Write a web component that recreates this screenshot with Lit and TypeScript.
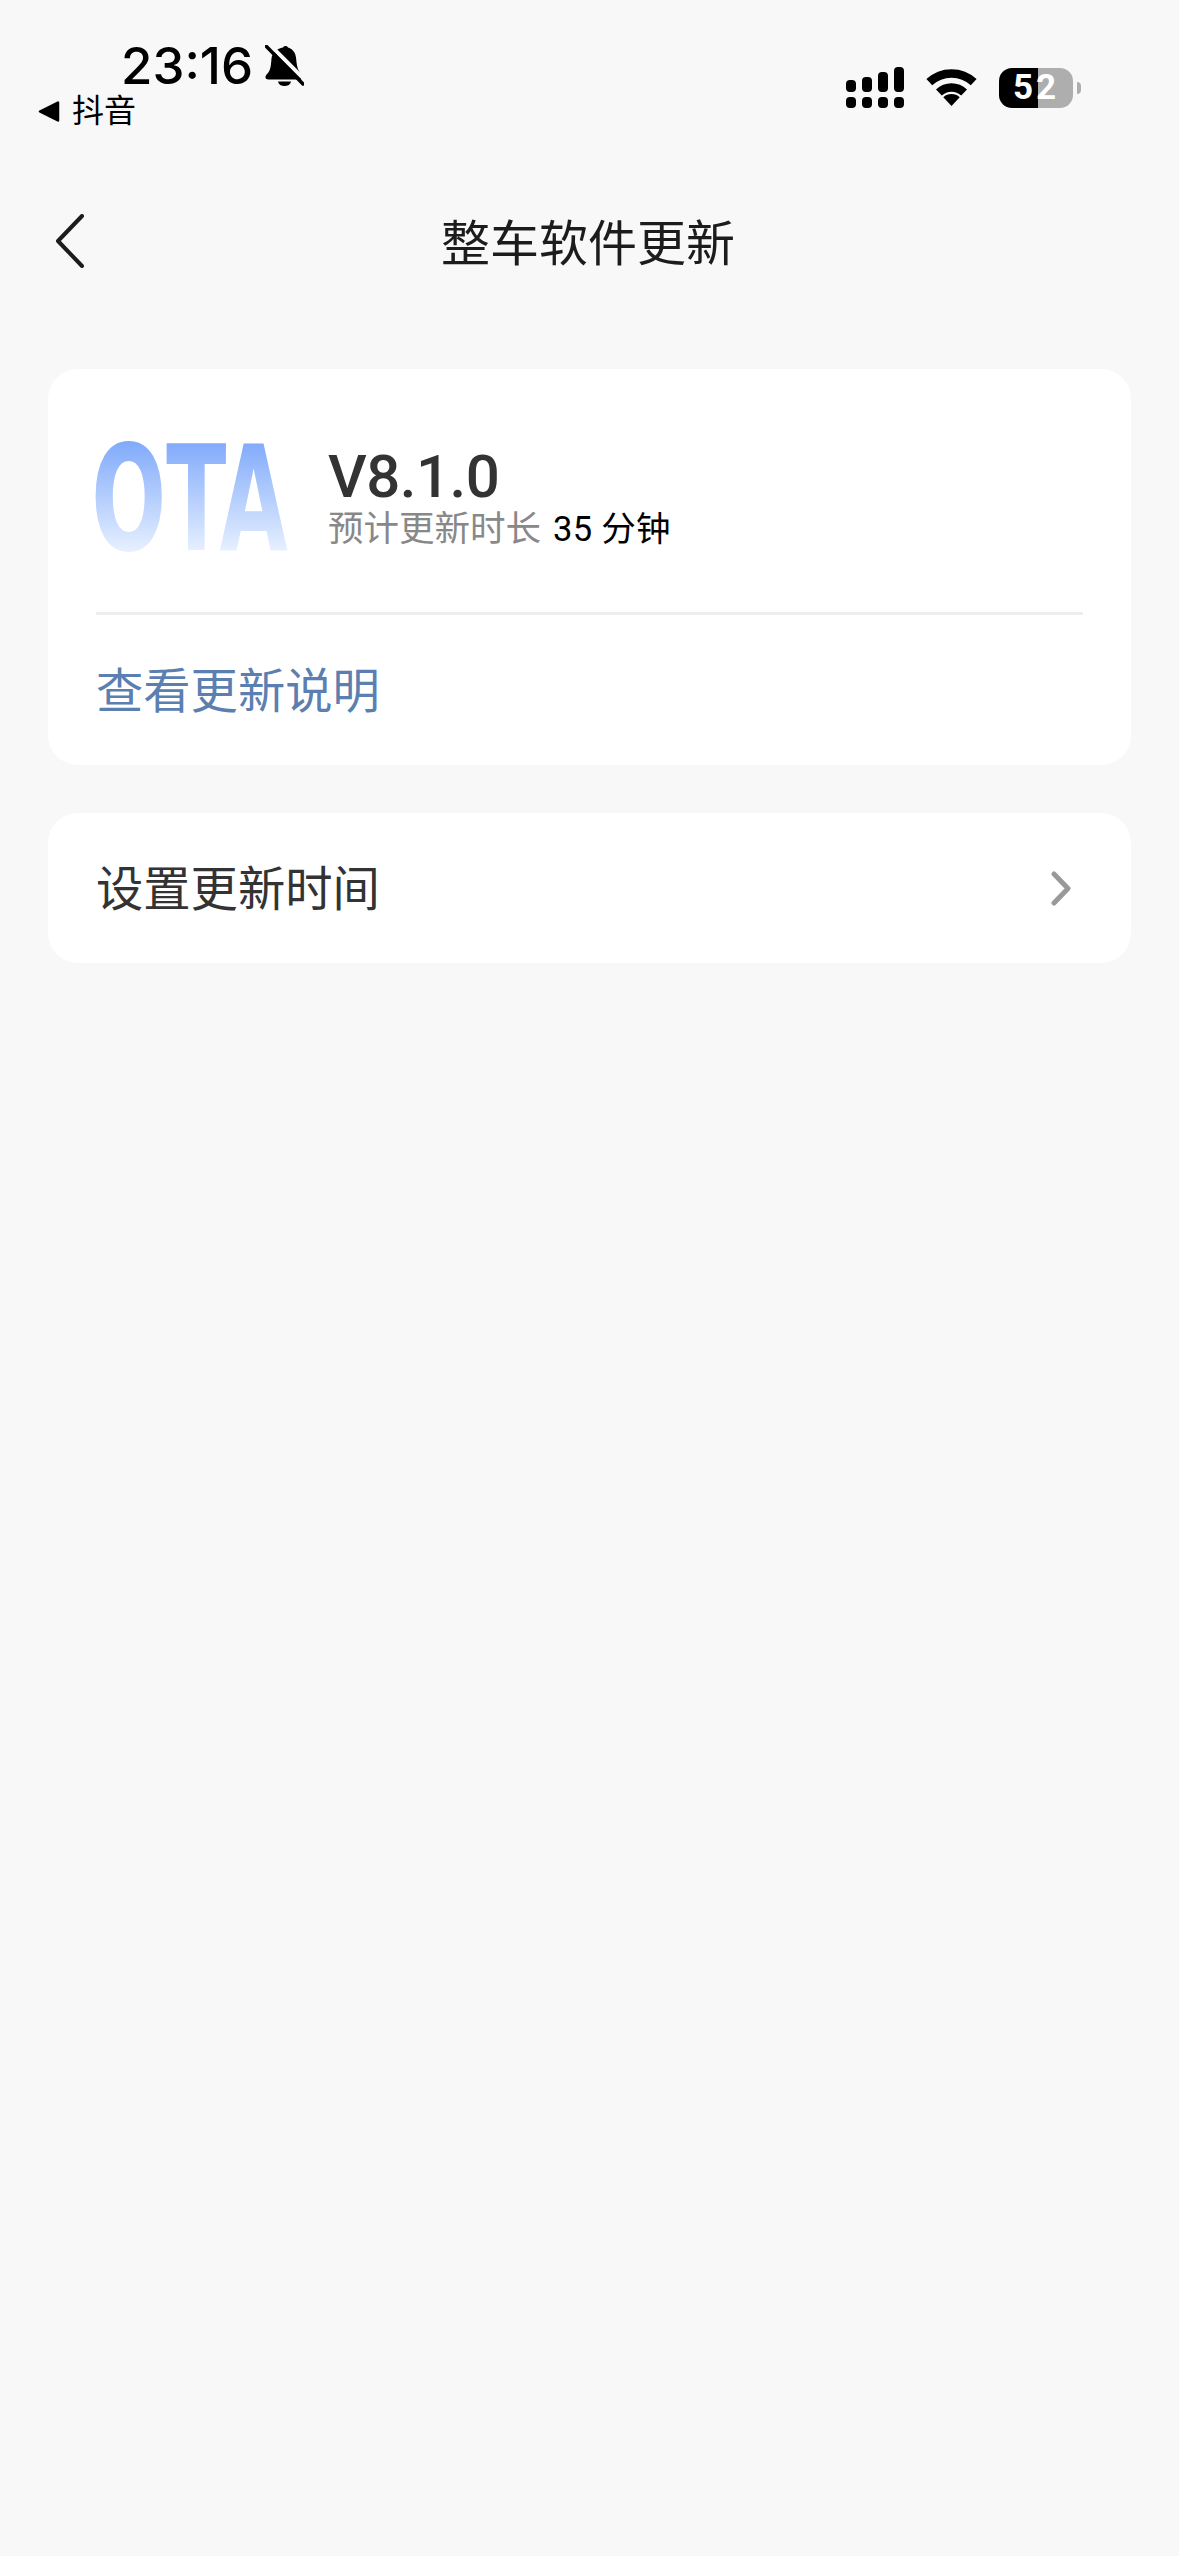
import { LitElement, html, css, svg } from 'lit';
import { customElement } from 'lit/decorators.js';

const cjk = css`Roboto, "Noto Sans CJK SC", sans-serif`;

@customElement('status-bar')
export class StatusBar extends LitElement {
  static styles = css`
    :host {
      display: flex;
      justify-content: space-between;
      height: 176px;
      padding: 42px 98px 0 38px;
      box-sizing: border-box;
      font-family: ${cjk};
      color: #000;
    }
    .time-row {
      display: flex;
      align-items: center;
      gap: 12px;
      height: 46px;
      padding-left: 83px;
    }
    .time {
      font-family: Inter, Roboto, sans-serif;
      font-size: 51px;
      font-weight: 500;
      line-height: 46px;
      padding-top: 1px;
    }
    .from {
      display: flex;
      align-items: center;
      gap: 12px;
      margin-top: 3px;
      font-size: 32px;
      line-height: 40px;
    }
    .icons {
      display: flex;
      align-items: center;
      gap: 22px;
      height: 41px;
      margin-top: 25px;
    }
    svg { display: block; }
    .battery {
      display: flex;
      align-items: center;
      gap: 4px;
    }
    .level {
      width: 74px;
      height: 40px;
      border-radius: 13px;
      background: linear-gradient(90deg, #000 0 53%, #aeaeae 53% 100%);
      color: #fff;
      font-size: 35px;
      font-weight: 700;
      line-height: 40px;
      text-align: center;
      letter-spacing: 3px;
    }
    .cap {
      width: 4px;
      height: 12px;
      border-radius: 0 6px 6px 0;
      background: #aeaeae;
    }
  `;

  render() {
    return html`
      <div>
        <div class="time-row">
          <span class="time">23:16</span>
          <svg width="39" height="41" viewBox="0 0 39 41">
            <path d="M18 2.500c1-2 4-2 5 0 1 .3 7 2 8 10 .6 6 1 11 3.500 14.500 1.500 2 3 3.500 3 5.500 0 1.500-1 2-2.500 2H3.500C1.500 34.500 0 33.500 .5 31.500c.5-2 3-3.500 4-6 1.500-3.500 1.500-7 2-12 .7-6.500 6-10 11.500-11Z" fill="#000"/>
            <path d="M13 36.500h13c-.5 3-3.200 4.500-6.500 4.500S13.500 39.500 13 36.500Z" fill="#000"/>
            <path d="M4 -1 42 37" stroke="#f8f8f8" stroke-width="4"/>
            <path d="M1.500 1.500 38 39" stroke="#000" stroke-width="3.500" stroke-linecap="round"/>
          </svg>
        </div>
        <div class="from">
          <svg width="22" height="21" viewBox="0 0 22 21">
            <path d="M20 1.500v18L2 10.500Z" fill="#000" stroke="#000" stroke-width="2.500" stroke-linejoin="round"/>
          </svg>
          <span>抖音</span>
        </div>
      </div>
      <div class="icons">
        <svg width="58" height="41" viewBox="0 0 58 41">
          <rect x="0" y="13" width="10" height="12" rx="4"/>
          <rect x="16" y="10" width="10" height="15" rx="4"/>
          <rect x="32" y="5" width="10" height="20" rx="4"/>
          <rect x="48" y="0" width="10" height="25" rx="4"/>
          <rect x="0" y="30" width="10" height="11" rx="4"/>
          <rect x="16" y="30" width="10" height="11" rx="4"/>
          <rect x="32" y="30" width="10" height="11" rx="4"/>
          <rect x="48" y="30" width="10" height="11" rx="4"/>
        </svg>
        <svg width="51" height="37" viewBox="0 0 51 37" fill="none" stroke="#000" stroke-width="8.500">
          <path d="M3.300 13.200A32.500 32.500 0 0 1 47.700 13.200"/>
          <path d="M12.900 23.500A18.500 18.500 0 0 1 38.100 23.500"/>
          <path d="M25.500 37 17.300 28.200A12 12 0 0 1 33.700 28.200Z" fill="#000" stroke="none"/>
        </svg>
        <div class="battery">
          <div class="level">52</div>
          <div class="cap"></div>
        </div>
      </div>
    `;
  }
}

@customElement('nav-bar')
export class NavBar extends LitElement {
  static styles = css`
    :host {
      display: flex;
      align-items: center;
      height: 134px;
      padding-left: 55px;
      position: relative;
      font-family: ${cjk};
    }
    svg { display: block; margin-bottom: 5px; }
    .title {
      position: absolute;
      left: 0;
      right: 3px;
      top: 2px;
      text-align: center;
      font-size: 49px;
      line-height: 134px;
      color: #1c1c1c;
    }
  `;

  render() {
    return html`
      <svg width="30" height="54" viewBox="0 0 30 54" fill="none" stroke="#1c1c1c" stroke-width="4" stroke-linecap="round" stroke-linejoin="round">
        <path d="M27 2 3 27 27 52"/>
      </svg>
      <div class="title">整车软件更新</div>
    `;
  }
}

@customElement('app-root')
export class AppRoot extends LitElement {
  static styles = css`
    :host {
      display: block;
      min-height: 2556px;
      background: #f8f8f8;
      font-family: ${cjk};
    }
    .content {
      display: flex;
      flex-direction: column;
      gap: 48px;
      padding: 59px 48px 0;
    }
    .card {
      background: #fff;
      border-radius: 30px;
      padding: 0 48px;
    }
    .summary {
      display: flex;
      align-items: flex-start;
      gap: 40px;
      height: 246px;
      padding-top: 71px;
      box-sizing: border-box;
      border-bottom: 3px solid #eeeeee;
    }
    .logo { display: block; overflow: visible; }
    .logo text {
      font-family: "DejaVu Sans", sans-serif;
      font-weight: 700;
      font-size: 147px;
    }
    .version {
      font-size: 60px;
      font-weight: 500;
      line-height: 61px;
      margin-top: 6px;
      letter-spacing: -0.5px;
      color: #333;
    }
    .eta {
      display: flex;
      align-items: baseline;
      gap: 12px;
      font-size: 35.5px;
      line-height: 44px;
      color: #888;
    }
    .eta b {
      font-size: 34.5px;
      font-weight: 400;
      letter-spacing: 0.3px;
      color: #000;
    }
    .row {
      display: flex;
      align-items: center;
      justify-content: space-between;
      height: 150px;
      padding-bottom: 6px;
      box-sizing: border-box;
      font-size: 47.3px;
      color: #333;
    }
    .link { color: #5a7fb0; }
    .row svg { display: block; margin: 6px 12px 0 0; }
  `;

  private logo() {
    return svg`
      <defs>
        <linearGradient id="ota" gradientUnits="userSpaceOnUse" x1="0" y1="0" x2="0" y2="113">
          <stop offset="0" stop-color="#7fa9fb"/>
          <stop offset="1" stop-color="#e8f1ff"/>
        </linearGradient>
      </defs>
      <text transform="scale(0.6 1)" x="-8" y="110" fill="url(#ota)">OTA</text>
    `;
  }

  render() {
    return html`
      <status-bar></status-bar>
      <nav-bar></nav-bar>
      <div class="content">
        <section class="card">
          <div class="summary">
            <svg class="logo" width="192" height="114" viewBox="0 0 192 114">${this.logo()}</svg>
            <div>
              <div class="version">V8.1.0</div>
              <div class="eta"><span>预计更新时长</span><b>35 分钟</b></div>
            </div>
          </div>
          <div class="row link">查看更新说明</div>
        </section>
        <section class="card">
          <div class="row">
            <span>设置更新时间</span>
            <svg width="20" height="35" viewBox="0 0 20 35" fill="none" stroke="#999" stroke-width="5" stroke-linecap="round" stroke-linejoin="round">
              <path d="M3 3 17 17.500 3 32"/>
            </svg>
          </div>
        </section>
      </div>
    `;
  }
}
